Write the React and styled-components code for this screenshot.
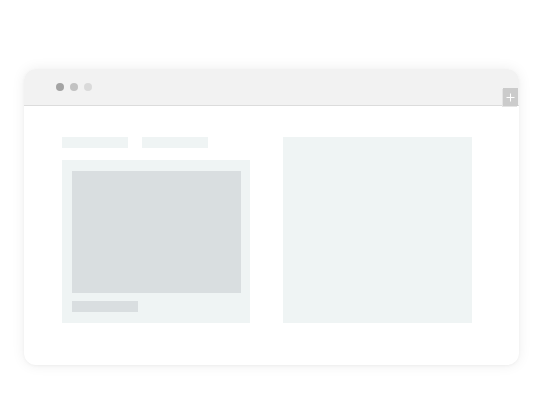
import React from "react";
import styled, { createGlobalStyle } from "styled-components";

const GlobalStyle = createGlobalStyle`
  html, body {
    margin: 0;
    padding: 0;
    background: #ffffff;
    font-family: "Liberation Sans", Arial, sans-serif;
  }
`;

const Stage = styled.div`
  width: 551px;
  height: 408px;
  box-sizing: border-box;
  padding: 69px 0 0 24px;
`;

const Window = styled.div`
  position: relative;
  width: 495px;
  height: 296px;
  border-radius: 12px;
  background: #ffffff;
  box-shadow: 0 0 14px rgba(0, 0, 0, 0.07), 0 1px 3px rgba(0, 0, 0, 0.04);
  overflow: hidden;
  display: flex;
  flex-direction: column;
`;

const TitleBar = styled.div`
  height: 37px;
  flex-shrink: 0;
  box-sizing: border-box;
  background: #f2f2f2;
  border-bottom: 1px solid #dcdcdc;
  display: flex;
  align-items: center;
  gap: 6px;
  padding: 0 0 0 32px;
`;

const Dot = styled.span`
  width: 8px;
  height: 8px;
  border-radius: 50%;
  background: ${(p) => p.$color};
`;

const PlusButton = styled.div`
  position: absolute;
  top: 19px;
  right: 1px;
  width: 15px;
  height: 18px;
  background: #cbcbcb;
  box-shadow: -1px 1px 0 #e4e4e4;
  display: flex;
  align-items: center;
  justify-content: center;
  svg {
    display: block;
  }
`;

const Body = styled.div`
  flex: 1;
  display: flex;
  gap: 33px;
  padding: 31px 0 0 38px;
`;

const Column = styled.div`
  width: 188px;
  display: flex;
  flex-direction: column;
  gap: 12px;
`;

const Tabs = styled.div`
  display: flex;
  gap: 14px;
`;

const Tab = styled.div`
  width: 66px;
  height: 11px;
  background: #eff4f4;
`;

const Card = styled.div`
  height: 163px;
  box-sizing: border-box;
  background: #eff4f4;
  padding: 11px 9px 11px 10px;
  display: flex;
  flex-direction: column;
  gap: 8px;
`;

const Thumb = styled.div`
  height: 122px;
  background: #d9dee0;
`;

const Caption = styled.div`
  width: 66px;
  height: 11px;
  background: #d9dee0;
`;

const Panel = styled.div`
  width: 189px;
  height: 186px;
  background: #eff4f4;
`;

export default function App() {
  return (
    <>
      <GlobalStyle />
      <Stage>
        <Window>
          <TitleBar>
            <Dot $color="#a3a3a3" />
            <Dot $color="#c2c2c2" />
            <Dot $color="#dadada" />
          </TitleBar>
          <PlusButton>
            <svg width="9" height="9" viewBox="0 0 9 9">
              <path d="M4.5 0.5v8M0.5 4.5h8" stroke="#ffffff" strokeWidth="1" />
            </svg>
          </PlusButton>
          <Body>
            <Column>
              <Tabs>
                <Tab />
                <Tab />
              </Tabs>
              <Card>
                <Thumb />
                <Caption />
              </Card>
            </Column>
            <Panel />
          </Body>
        </Window>
      </Stage>
    </>
  );
}
